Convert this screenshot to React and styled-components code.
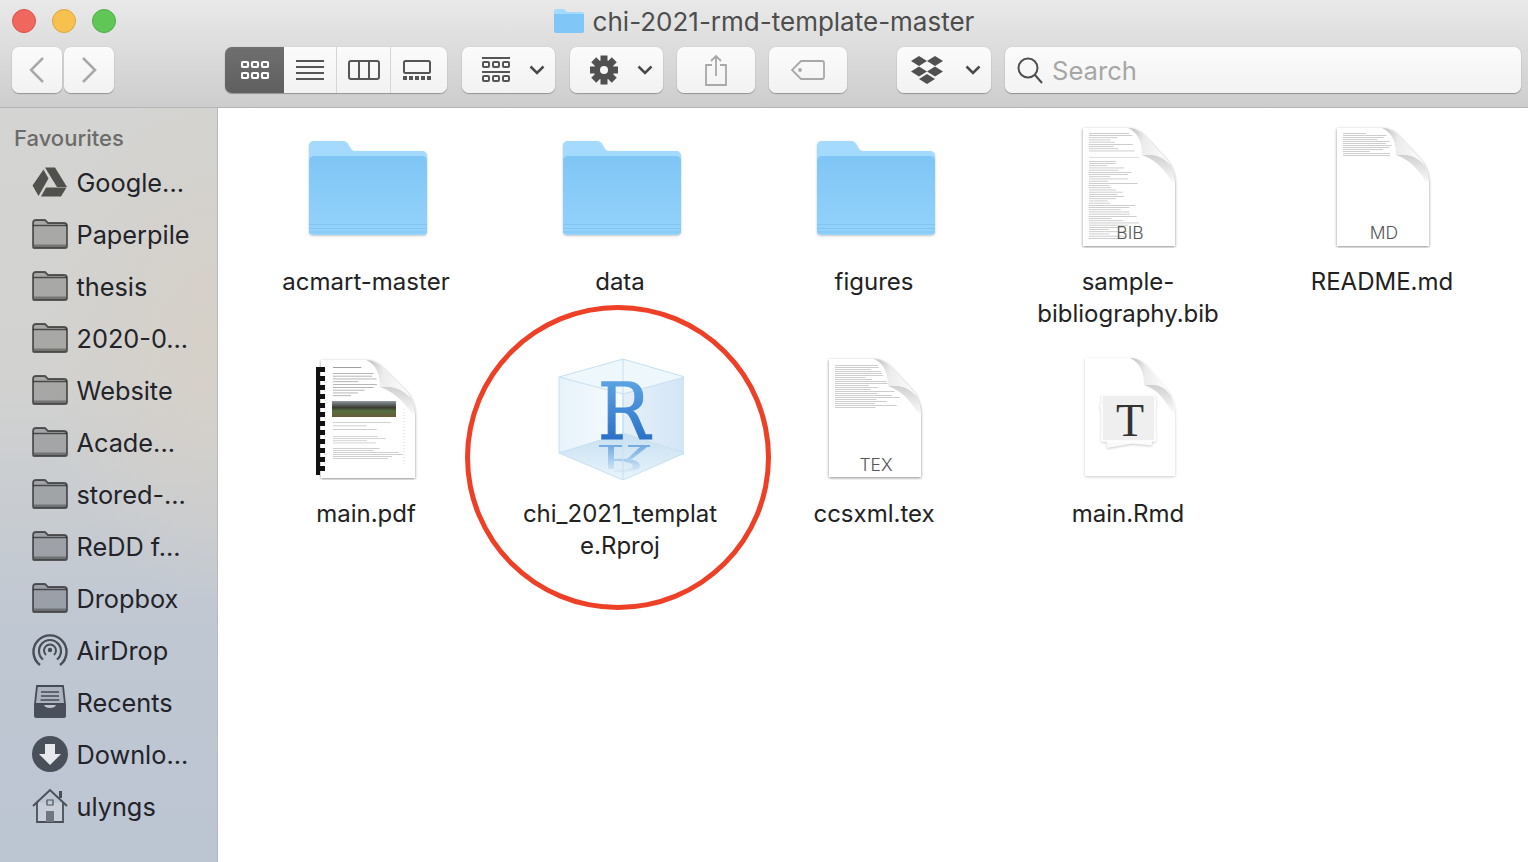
import React from 'react'
import styled, { createGlobalStyle } from 'styled-components'

const GlobalStyle = createGlobalStyle`
  html, body {
    margin: 0;
    padding: 0;
    height: 100%;
    background: #fff;
    overflow: hidden;
  }
  * {
    box-sizing: border-box;
  }
`

/* tiny fake text lines shown inside the file previews */
const greekLines = (x, y, width, count, step, seed, color = '#b8b8b8') => {
  const lines = []
  let s = seed
  for (let i = 0; i < count; i++) {
    s = (s * 9301 + 49297) % 233280
    const w = width * (0.35 + (s / 233280) * 0.65)
    lines.push(<rect key={i} x={x} y={y + i * step} width={w} height={0.7} fill={color} />)
  }
  return lines
}

const FolderBig = () => (
  <svg width="128" height="128" viewBox="0 0 128 128">
    <defs>
      <linearGradient id="folderFront" x1="0" y1="0" x2="0" y2="1">
        <stop offset="0" stopColor="#7fc5f5" />
        <stop offset="1" stopColor="#93d3fb" />
      </linearGradient>
    </defs>
    <g style={{ filter: 'drop-shadow(0 1px 1px rgba(0,0,0,.22))' }}>
      <path
        d="M7 26c0-3 2-5 5-5h29c2 0 4 1 5 3l3 5c1 1 2 2 4 2h67c3 0 5 2 5 5v20H7z"
        fill="#a5daff"
      />
      <path
        d="M7 41c0-3 2-5 5-5h108c3 0 5 2 5 5v70c0 3-2 4-4 4H11c-2 0-4-1-4-4z"
        fill="url(#folderFront)"
      />
      <path d="M7 104h118v1H7zM7 108h118v1H7zM7 111.500h118v1H7z" fill="#7dbfec" opacity=".7" />
    </g>
  </svg>
)

const Doc = ({ x = 19, y = 8, w = 92, h = 118, children, shadow = true }) => (
  <g transform={`translate(${x} ${y})`}>
    <defs>
      <linearGradient id="foldFace" x1="0" y1="0.4" x2="1" y2="0.6">
        <stop offset="0" stopColor="#c4c4c4" />
        <stop offset="0.35" stopColor="#ececec" />
        <stop offset="1" stopColor="#fdfdfd" />
      </linearGradient>
      <linearGradient id="foldShade" x1="0" y1="0" x2="0" y2="1">
        <stop offset="0" stopColor="#cfcfcf" />
        <stop offset="1" stopColor="#fff" />
      </linearGradient>
      <clipPath id="docClip">
        <path d={`M0 0H45L${w - 32} 27L${w} 58V${h}H0Z`} />
      </clipPath>
    </defs>
    <path
      d={`M0 0H45C52 0 57 3 62 8L${w - 8} 32C${w - 3} 38 ${w} 46 ${w} 58V${h}H0Z`}
      fill="#fff"
      style={{ filter: `drop-shadow(0 1px 1.500px rgba(0,0,0,${shadow ? 0.45 : 0.2}))` }}
    />
    <g clipPath="url(#docClip)">{children}</g>
    <path d={`M59 27C70 25 80 28 ${w - 4} 38C${w - 2} 44 ${w} 50 ${w} 58C${w - 10} 44 76 33 59 27Z`} fill="url(#foldShade)" />
    <path d={`M45 0C56 5 59 15 59 27C70 25 81 28 ${w - 4} 38L62 8C57 3 52 0 45 0Z`} fill="url(#foldFace)" />
  </g>
)

const FileBadge = styled.text`
  font-family: Inter, sans-serif;
  font-size: 17.500px;
  font-weight: 300;
  fill: #555;
  text-anchor: middle;
`

const BibIcon = () => (
  <svg width="128" height="128" viewBox="0 0 128 128">
    <Doc>
      {greekLines(6, 5, 52, 9, 2.2, 11)}
      <rect x="6" y="29" width="50" height="0.600" fill="#ccc" />
      {greekLines(6, 33, 50, 36, 2.2, 27)}
    </Doc>
    <FileBadge x="66" y="119">BIB</FileBadge>
  </svg>
)

const MdIcon = () => (
  <svg width="128" height="128" viewBox="0 0 128 128">
    <Doc>{greekLines(6, 5, 54, 12, 2, 73)}</Doc>
    <FileBadge x="66" y="119">MD</FileBadge>
  </svg>
)

const TexIcon = () => (
  <svg width="128" height="128" viewBox="0 0 128 128">
    <Doc y={7}>{greekLines(6, 6, 78, 22, 2, 41)}</Doc>
    <FileBadge x="66" y="119">TEX</FileBadge>
  </svg>
)

const RmdIcon = () => (
  <svg width="128" height="128" viewBox="0 0 128 128">
    <Doc x={21} y={6} w={90} shadow={false} />
    <g style={{ filter: 'drop-shadow(0 1px 1px rgba(0,0,0,.2))' }}>
      <rect x="39" y="47" width="50" height="45" fill="#fafafa" transform="rotate(-10 64 69)" />
      <rect x="39" y="46" width="51" height="45" fill="#fcfcfc" transform="rotate(6 64 69)" />
      <rect x="38" y="43" width="53" height="46" fill="#efefef" stroke="#fff" strokeWidth="1.500" />
    </g>
    <RmdLetter x="66" y="84">T</RmdLetter>
  </svg>
)

const RmdLetter = styled.text`
  font-family: 'Liberation Serif', serif;
  font-size: 46px;
  fill: #333;
  text-anchor: middle;
`

const PdfIcon = () => (
  <svg width="128" height="128" viewBox="0 0 128 128">
    <defs>
      <linearGradient id="pdfPhoto" x1="0" y1="0" x2="0" y2="1">
        <stop offset="0" stopColor="#8f9aa0" />
        <stop offset="0.4" stopColor="#3b3a32" />
        <stop offset="0.62" stopColor="#55703f" />
        <stop offset="1" stopColor="#6a5a3a" />
      </linearGradient>
    </defs>
    <Doc w={94}>
      {greekLines(12, 7, 50, 1, 2, 3, '#777')}
      {greekLines(12, 13, 46, 9, 2.8, 91, '#999')}
      <rect x="11" y="41" width="64" height="16" fill="url(#pdfPhoto)" />
      {greekLines(12, 62, 66, 3, 3.5, 15, '#bbb')}
      {greekLines(12, 76, 70, 4, 2.2, 31, '#c4c4c4')}
      {greekLines(12, 88, 70, 6, 2, 57, '#bbb')}
      <path d="M4 10V106" stroke="#f1c8c8" strokeDasharray="1 2" />
      <path d="M83 10V106" stroke="#f1c8c8" strokeDasharray="1 2" />
    </Doc>
    <rect x="14" y="15" width="4" height="108" fill="#111" />
    {Array.from({ length: 12 }).map((_, i) => (
      <rect key={i} x="16" y={15 + i * 9} width="7" height="5" fill="#111" />
    ))}
  </svg>
)

const RprojIcon = () => (
  <svg width="128" height="128" viewBox="0 0 128 128">
    <defs>
      <linearGradient id="cubeLeft" x1="0" y1="0" x2="1" y2="0">
        <stop offset="0" stopColor="#e6f2fa" />
        <stop offset="1" stopColor="#f8fcfe" />
      </linearGradient>
      <linearGradient id="cubeRight" x1="0" y1="0" x2="1" y2="0">
        <stop offset="0" stopColor="#e4f0f9" />
        <stop offset="1" stopColor="#d3e5f5" />
      </linearGradient>
      <linearGradient id="cubeFloor" x1="0" y1="0" x2="0" y2="1">
        <stop offset="0" stopColor="#c6dff1" />
        <stop offset="1" stopColor="#e8f4fb" />
      </linearGradient>
      <linearGradient id="letterBlue" gradientUnits="userSpaceOnUse" x1="0" y1="30" x2="0" y2="87">
        <stop offset="0" stopColor="#5ba2e2" />
        <stop offset="1" stopColor="#2b72c8" />
      </linearGradient>
      <linearGradient id="glare" gradientUnits="userSpaceOnUse" x1="0" y1="92" x2="0" y2="122">
        <stop offset="0" stopColor="#4f93db" stopOpacity=".75" />
        <stop offset="1" stopColor="#4f93db" stopOpacity="0" />
      </linearGradient>
    </defs>
    <path d="M3 25L67 7V81L3 101Z" fill="url(#cubeLeft)" />
    <path d="M67 7L129 25V101L67 81Z" fill="url(#cubeRight)" />
    <path d="M3 25L67 7L129 25L67 42Z" fill="#eef7fc" />
    <path d="M3 101L67 81L129 101L67 128Z" fill="url(#cubeFloor)" />
    {/* soft glare of the logo on the cube floor */}
    <path
      d="M43 93h23v2h-8v22h-6V95h-9zM72 93h22v2h-3L76 107h-5l13-12H72zM58 107c12-1 26 0 26 7 0 5-14 7-26 6v-2c9 0 19-1 19-4s-9-5-19-5z"
      fill="url(#glare)"
    />
    <path
      d="M3 25L67 7L129 25V101L67 128L3 101ZM3 25L67 42L129 25M67 42V128M3 101L67 81L129 101M67 7V81"
      fill="none"
      stroke="#c5e0ef"
      strokeWidth="1"
    />
    <CubeLetter x="42" y="87" textLength="52" lengthAdjust="spacingAndGlyphs">R</CubeLetter>
  </svg>
)

const CubeLetter = styled.text`
  font-family: 'DejaVu Serif', serif;
  font-size: 78px;
  fill: url(#letterBlue);
  stroke: url(#letterBlue);
  stroke-width: 1.200px;
`

const files = [
  { name: 'acmart-master', icon: <FolderBig /> },
  { name: 'data', icon: <FolderBig /> },
  { name: 'figures', icon: <FolderBig /> },
  { name: 'sample-bibliography.bib', icon: <BibIcon /> },
  { name: 'README.md', icon: <MdIcon /> },
  { name: 'main.pdf', icon: <PdfIcon /> },
  { name: 'chi_2021_template.Rproj', icon: <RprojIcon />, circled: true },
  { name: 'ccsxml.tex', icon: <TexIcon /> },
  { name: 'main.Rmd', icon: <RmdIcon /> },
]

/* sidebar icons */
const sideStroke = 'rgba(30,30,30,.68)'

const SideFolder = () => (
  <svg width="36" height="30" viewBox="0 0 36 30">
    <path d="M1 4c0-2 1-3 3-3h9l3 3h16c2 0 3 1 3 3v20c0 1-1 2-2 2H2c-1 0-1-1-1-2z" fill="rgba(0,0,0,.2)" stroke={sideStroke} strokeWidth="1.800" />
    <path d="M1 6.500h34" stroke={sideStroke} strokeWidth="1.500" fill="none" />
    <path d="M2 25.500h32v2.500H2z" fill="rgba(0,0,0,.3)" />
  </svg>
)

const DriveIcon = () => (
  <svg width="36" height="30" viewBox="0 0 36 30" fill="#50504c">
    <path d="M13 .5h10l12 19.500H25z" />
    <path d="M11.500 2.500l5 9L6.500 29 .5 18.500z" />
    <path d="M14 20.500h20.500L29 29.500H9z" />
  </svg>
)

const AirdropIcon = () => (
  <svg width="36" height="36" viewBox="0 0 36 36" fill="none" stroke="rgba(50,55,65,.85)" strokeWidth="2.400">
    <path d="M8 33a16.500 16.500 0 1 1 20 0" />
    <path d="M11 27.500a11 11 0 1 1 14 0" strokeWidth="2.200" />
    <path d="M14 23a6 6 0 1 1 8 0" strokeWidth="2" />
    <circle cx="18" cy="18" r="2.200" fill="rgba(50,55,65,.85)" stroke="none" />
  </svg>
)

const RecentsIcon = () => (
  <svg width="36" height="34" viewBox="0 0 36 34">
    <path d="M5 1h26l2 18H3z" fill="#aeb4bf" stroke="#454b56" strokeWidth="1.800" />
    <path d="M9 7h18M9 11h18M8.500 15h19" stroke="#454b56" strokeWidth="1.500" />
    <path d="M2 20h10c1 4 11 4 12 0h10v11c0 1-1 2-2 2H4c-1 0-2-1-2-2z" fill="#4a505b" />
  </svg>
)

const DownloadIcon = () => (
  <svg width="36" height="36" viewBox="0 0 36 36">
    <circle cx="18" cy="18" r="18" fill="#4a505a" />
    <path d="M13 8h10v10h6L18 29 7 18h6z" fill="#e6e8ec" />
  </svg>
)

const HomeIcon = () => (
  <svg width="36" height="36" viewBox="0 0 36 36">
    <path d="M27 3h3v7h-3z" fill="#4a505a" />
    <path d="M5 15v19h26V15" fill="#c9ced8" stroke="#4a505a" strokeWidth="1.800" />
    <path d="M1 18L18 2l17 16" fill="none" stroke="#4a505a" strokeWidth="2" />
    <path d="M15 12h6v5h-6z" fill="none" stroke="#4a505a" strokeWidth="1.200" />
    <path d="M14 23h8v11h-8z" fill="#6f7681" />
  </svg>
)

const sidebarItems = [
  { name: 'Google...', icon: <DriveIcon /> },
  { name: 'Paperpile', icon: <SideFolder /> },
  { name: 'thesis', icon: <SideFolder /> },
  { name: '2020-0...', icon: <SideFolder /> },
  { name: 'Website', icon: <SideFolder /> },
  { name: 'Acade...', icon: <SideFolder /> },
  { name: 'stored-...', icon: <SideFolder /> },
  { name: 'ReDD f...', icon: <SideFolder /> },
  { name: 'Dropbox', icon: <SideFolder /> },
  { name: 'AirDrop', icon: <AirdropIcon /> },
  { name: 'Recents', icon: <RecentsIcon /> },
  { name: 'Downlo...', icon: <DownloadIcon /> },
  { name: 'ulyngs', icon: <HomeIcon /> },
]

/* toolbar icons */
const GridIcon = ({ color }) => (
  <svg width="28" height="20" viewBox="0 0 28 20" fill="none" stroke={color} strokeWidth="2.200">
    {[1, 11, 21].map((x) =>
      [2, 13].map((y) => <rect key={`${x}-${y}`} x={x} y={y} width="6" height="5" rx="1" />)
    )}
  </svg>
)

const ListIcon = () => (
  <svg width="28" height="20" viewBox="0 0 28 20" stroke="#555" strokeWidth="2">
    <path d="M0 1h28M0 7h28M0 13h28M0 19h28" />
  </svg>
)

const ColumnsIcon = () => (
  <svg width="32" height="20" viewBox="0 0 32 20" fill="none" stroke="#555" strokeWidth="2">
    <rect x="1" y="1" width="30" height="18" rx="2" />
    <path d="M11 1v18M21 1v18" />
  </svg>
)

const GalleryIcon = () => (
  <svg width="28" height="20" viewBox="0 0 28 20" fill="#555">
    <rect x="1" y="1" width="26" height="12" rx="1.500" fill="none" stroke="#555" strokeWidth="2" />
    {[0, 6, 12, 18, 24].map((x) => (
      <rect key={x} x={x} y="16" width="4" height="4" />
    ))}
  </svg>
)

const GroupIcon = () => (
  <svg width="28" height="26" viewBox="0 0 28 26" fill="none" stroke="#555" strokeWidth="2">
    <path d="M0 1h28M0 15h28" />
    {[1, 11, 21].map((x) => (
      <g key={x}>
        <rect x={x} y="5" width="6" height="5" rx="1" />
        <rect x={x} y="19" width="6" height="5" rx="1" />
      </g>
    ))}
  </svg>
)

const Chevron = () => (
  <svg width="16" height="10" viewBox="0 0 16 10" fill="none" stroke="#4a4a4a" strokeWidth="2.500">
    <path d="M1.500 1.500L8 8l6.500-6.500" />
  </svg>
)

const NavArrow = ({ flip }) => (
  <svg width="16" height="26" viewBox="0 0 16 26" fill="none" stroke="#a8a8a8" strokeWidth="2.500">
    <path d={flip ? 'M2 1l12 12L2 25' : 'M14 1L2 13l12 12'} />
  </svg>
)

const GearIcon = () => (
  <svg width="28" height="30" viewBox="0 0 28 30" fill="#505050">
    {[0, 45, 90, 135, 180, 225, 270, 315].map((a) => (
      <rect key={a} x="10.500" y="0.500" width="7" height="7" transform={`rotate(${a} 14 15)`} />
    ))}
    <circle cx="14" cy="15" r="10" />
    <circle cx="14" cy="15" r="4" fill="#f6f6f6" />
  </svg>
)

const ShareIcon = () => (
  <svg width="22" height="32" viewBox="0 0 22 32" fill="none" stroke="#a8a8a8" strokeWidth="1.800">
    <path d="M7 11H1v20h20V11h-6M11 22V2M6 7l5-5 5 5" />
  </svg>
)

const TagIcon = () => (
  <svg width="34" height="20" viewBox="0 0 34 20" fill="none" stroke="#a8a8a8" strokeWidth="1.800">
    <path d="M10 1h21c1 0 2 1 2 2v14c0 1-1 2-2 2H10L1 10z" />
    <circle cx="9" cy="10" r="1" fill="#a8a8a8" />
  </svg>
)

const DropboxIcon = () => (
  <svg width="32" height="28" viewBox="0 0 32 28" fill="#505050">
    <path d="M8 0l8 5-8 5-8-5zM24 0l8 5-8 5-8-5zM8 10.500l8 5-8 5-8-5zM24 10.500l8 5-8 5-8-5zM16 18l8 5-8 5-8-5z" />
  </svg>
)

const SearchIcon = () => (
  <svg width="26" height="28" viewBox="0 0 26 28" fill="none" stroke="#4f4f4f" strokeWidth="2">
    <circle cx="11" cy="12" r="9.500" />
    <path d="M18 19l7 8" />
  </svg>
)

const TitleFolder = () => (
  <svg width="30" height="24" viewBox="0 0 30 24">
    <path d="M0 2c0-1 1-2 2-2h8l3 3h15c1 0 2 1 2 2v5H0z" fill="#a5daff" />
    <path d="M0 5h30v17c0 1-1 2-2 2H2c-1 0-2-1-2-2z" fill="#80c6f6" />
  </svg>
)

const App = () => {
  return (
    <>
      <GlobalStyle />
      <Window>
        <TitleBar>
          <TitleRow>
            <Lights>
              <Light $color="#f0675d" $edge="#dd5247" />
              <Light $color="#f6c14e" $edge="#dfa53a" />
              <Light $color="#60c656" $edge="#4fae45" />
            </Lights>
            <WindowTitle>
              <TitleFolder />
              <span>chi-2021-rmd-template-master</span>
            </WindowTitle>
          </TitleRow>
          <Toolbar>
            <ToolButton $w={50}><NavArrow /></ToolButton>
            <ToolButton $w={50} $ml={2}><NavArrow flip /></ToolButton>
            <Segments>
              <Segment $w={59} $active><GridIcon color="#fff" /></Segment>
              <Segment $w={53}><ListIcon /></Segment>
              <Segment $w={54}><ColumnsIcon /></Segment>
              <Segment $w={56} $last $pr={5}><GalleryIcon /></Segment>
            </Segments>
            <ToolButton $w={93} $ml={15} $gap={19} $pl={9}><GroupIcon /><Chevron /></ToolButton>
            <ToolButton $w={93} $ml={15} $gap={19} $pl={9}><GearIcon /><Chevron /></ToolButton>
            <ToolButton $w={78} $ml={14}><ShareIcon /></ToolButton>
            <ToolButton $w={78} $ml={14}><TagIcon /></ToolButton>
            <ToolButton $w={94} $ml={50} $gap={22} $pl={3}><DropboxIcon /><Chevron /></ToolButton>
            <SearchBox>
              <SearchIcon />
              <span>Search</span>
            </SearchBox>
          </Toolbar>
        </TitleBar>
        <Body>
          <Sidebar>
            <SidebarHeading>Favourites</SidebarHeading>
            {sidebarItems.map((item) => (
              <SidebarItem key={item.name}>
                <SidebarIcon>{item.icon}</SidebarIcon>
                <span>{item.name}</span>
              </SidebarItem>
            ))}
          </Sidebar>
          <FileGrid>
            {files.map((file) => (
              <FileCell key={file.name}>
                {file.icon}
                <FileName>{file.name}</FileName>
                {file.circled && <Ring />}
              </FileCell>
            ))}
          </FileGrid>
        </Body>
      </Window>
    </>
  )
}

export default App

const Window = styled.div`
  display: flex;
  flex-direction: column;
  height: 100vh;
  overflow: hidden;
  font-family: Inter, 'Liberation Sans', sans-serif;
`
const TitleBar = styled.header`
  flex: none;
  height: 108px;
  padding-bottom: 14px;
  background: linear-gradient(#e9e9e9, #cdcdcd);
  border-bottom: 1px solid #b4b4b4;
`
const TitleRow = styled.div`
  display: grid;
  grid-template-columns: 1fr auto 1fr;
  align-items: center;
  height: 42px;
  margin-bottom: 5px;
`
const Lights = styled.div`
  display: flex;
  gap: 16px;
  padding-left: 12px;
`
const Light = styled.span`
  width: 24px;
  height: 24px;
  border-radius: 50%;
  background: ${({ $color }) => $color};
  border: 1px solid ${({ $edge }) => $edge};
`
const WindowTitle = styled.div`
  display: flex;
  align-items: center;
  gap: 9px;
  font-size: 26px;
  color: #4d4d4d;
  white-space: nowrap;
`
const Toolbar = styled.div`
  display: flex;
  height: 46px;
  padding: 0 7px 0 12px;
`
const ToolButton = styled.div`
  display: flex;
  align-items: center;
  justify-content: center;
  flex: none;
  gap: ${({ $gap }) => $gap || 0}px;
  width: ${({ $w }) => $w}px;
  margin-left: ${({ $ml }) => $ml || 0}px;
  padding-left: ${({ $pl }) => $pl || 0}px;
  border-radius: 7px;
  background: linear-gradient(#fbfbfb, #f2f2f2);
  box-shadow: 0 1px 1px rgba(0, 0, 0, 0.28), 0 0 1px rgba(0, 0, 0, 0.2);
`
const Segments = styled.div`
  display: flex;
  flex: none;
  width: 222px;
  margin-left: 111px;
  border-radius: 7px;
  overflow: hidden;
  box-shadow: 0 1px 1px rgba(0, 0, 0, 0.28), 0 0 1px rgba(0, 0, 0, 0.2);
`
const Segment = styled.div`
  display: flex;
  align-items: center;
  justify-content: center;
  width: ${({ $w }) => $w}px;
  padding-right: ${({ $pr }) => $pr || 0}px;
  background: ${({ $active }) =>
    $active ? 'linear-gradient(#6f6f6f, #5f5f5f)' : 'linear-gradient(#fbfbfb, #f2f2f2)'};
  border-right: ${({ $active, $last }) => ($active || $last ? 'none' : '1px solid #d5d5d5')};
`
const SearchBox = styled.div`
  display: flex;
  flex: 1;
  align-items: center;
  gap: 9px;
  margin-left: 14px;
  padding-left: 12px;
  border-radius: 7px;
  background: linear-gradient(#fbfbfb, #f3f3f3);
  box-shadow: 0 1px 1px rgba(0, 0, 0, 0.3), 0 0 1px rgba(0, 0, 0, 0.25);
  font-size: 25.600px;
  color: #a6a6a6;
`
const Body = styled.div`
  display: flex;
  flex: 1;
  min-height: 0;
`
const Sidebar = styled.aside`
  flex: none;
  width: 218px;
  padding-top: 14px;
  border-right: 1px solid #b9b9b9;
  background: radial-gradient(ellipse 180px 260px at 100% 230px, #d6d0c8 0%, rgba(214, 208, 200, 0) 100%),
    linear-gradient(#d4d4d2 0%, #d2d2d0 35%, #bfc7d2 70%, #bcc5d2 100%);
`
const SidebarHeading = styled.div`
  height: 32px;
  margin-bottom: 2px;
  padding-left: 14px;
  font-size: 22px;
  font-weight: 500;
  line-height: 32px;
  color: #6c6c6a;
`
const SidebarItem = styled.div`
  display: flex;
  align-items: center;
  gap: 8.500px;
  height: 52px;
  padding-left: 32px;
  font-size: 25.300px;
  color: #22242a;
  white-space: nowrap;
`
const SidebarIcon = styled.span`
  display: flex;
  align-items: center;
  justify-content: center;
  flex: none;
  width: 36px;
`
const FileGrid = styled.main`
  display: grid;
  flex: 1;
  grid-template-columns: repeat(5, 254px);
  grid-auto-rows: 232px;
  align-content: start;
  padding: 12px 0 0 21px;
  background: #fff;
`
const FileCell = styled.div`
  position: relative;
  display: flex;
  flex-direction: column;
  align-items: center;
`
const FileName = styled.div`
  width: 200px;
  margin-top: 18px;
  font-size: 24px;
  line-height: 32px;
  text-align: center;
  color: #222;
  overflow-wrap: anywhere;
`
const Ring = styled.div`
  position: absolute;
  top: -47px;
  left: -28px;
  width: 306px;
  height: 305px;
  border: 5px solid #ee4026;
  border-radius: 50%;
`
